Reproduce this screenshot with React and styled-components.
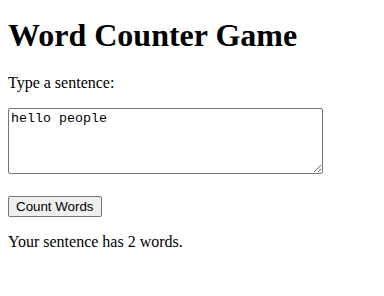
import React, { useState } from "react";
import styled, { createGlobalStyle } from "styled-components";

const GlobalStyle = createGlobalStyle`
  body {
    margin: 8px;
    background: #fff;
    color: #000;
    font-family: "Liberation Serif", "Times New Roman", serif;
    font-size: 16px;
  }
`;

const Title = styled.h1`
  font-size: 32px;
  font-weight: bold;
  margin: 9px 0 20.44px;
`;

const Text = styled.p`
  margin: 16px 0;
`;

const Form = styled.div`
  line-height: normal;
`;

const SentenceInput = styled.textarea`
  box-sizing: border-box;
  width: 315px;
  height: 66px;
  padding: 2px;
  border: 1px solid #767676;
  border-radius: 2px;
  font-family: "Liberation Mono", "Courier New", monospace;
  font-size: 13.33px;
  vertical-align: baseline;
  resize: both;
`;

const CountButton = styled.button`
  font-family: "Liberation Sans", Arial, sans-serif;
  font-size: 13.33px;
  padding: 2px 7px;
  border: 1px solid #767676;
  border-radius: 2px;
  background: #efefef;
  color: #000;
`;

function countWords(s) {
  const t = s.trim();
  return t === "" ? 0 : t.split(/\s+/).length;
}

export default function App() {
  const [sentence, setSentence] = useState("hello people");
  const [count, setCount] = useState(2);

  return (
    <>
      <GlobalStyle />
      <Title>Word Counter Game</Title>
      <Text>Type a sentence:</Text>
      <Form>
        <SentenceInput
          value={sentence}
          onChange={(e) => setSentence(e.target.value)}
        />
        <br />
        <br />
        <CountButton onClick={() => setCount(countWords(sentence))}>
          Count Words
        </CountButton>
      </Form>
      <Text>Your sentence has {count} words.</Text>
    </>
  );
}
